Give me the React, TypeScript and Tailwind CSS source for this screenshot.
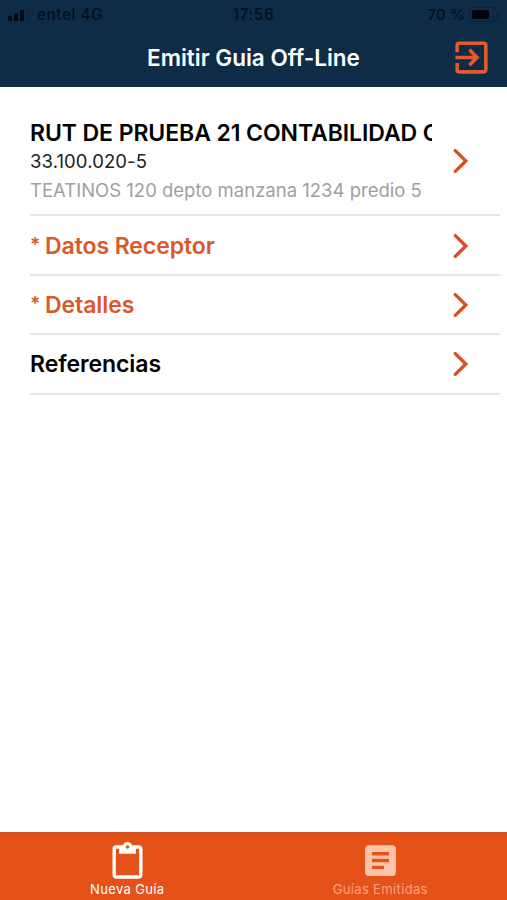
import type { ReactNode } from "react";
import { MdArticle, MdContentPaste, MdExitToApp } from "react-icons/md";

const sections = [
  { label: "Datos Receptor", required: true },
  { label: "Detalles", required: true },
  { label: "Referencias", required: false },
];

function Chevron() {
  return (
    <svg viewBox="0 0 16 26" className="h-[26px] w-4 shrink-0" fill="none">
      <path
        d="M2.3 2.6 12.8 13 2.3 23.4"
        stroke="#d6521f"
        strokeWidth="3.4"
        strokeLinecap="round"
      />
    </svg>
  );
}

function StatusBar() {
  return (
    <div className="grid h-7 grid-cols-3 items-center text-[15px] leading-none font-medium text-[#04101f]">
      <div className="flex items-center pl-2">
        <div className="flex h-3 w-[22px] translate-y-px items-end gap-[2px]">
          <span className="h-[5px] w-[4px] rounded-[1px] bg-[#020a15]" />
          <span className="h-[8px] w-[4px] rounded-[1px] bg-[#020a15]" />
          <span className="h-[11px] w-[4px] rounded-[1px] bg-[#020a15]" />
          <span className="h-3 w-[3px] rounded-[1px] bg-[#0b2640]" />
        </div>
        <span className="ml-[7px] pt-[2px] text-[15.5px] tracking-[0.45px] whitespace-nowrap">
          entel 4G
        </span>
      </div>
      <span className="pt-[2px] text-center text-[15.5px] tracking-[0.5px]">17:56</span>
      <div className="flex items-center justify-end pr-[7px]">
        <span className="tracking-[0.1px] whitespace-nowrap">70 %</span>
        <span className="ml-[4px] flex h-[15px] w-[28px] rounded-[4px] border border-[#0a2138] p-[2px]">
          <span className="w-[17px] rounded-[1px] bg-[#01060c]" />
        </span>
        <span className="ml-px h-[5px] w-[2px] rounded-r bg-[#0a2138]" />
      </div>
    </div>
  );
}

function Row({ children, className }: { children: ReactNode; className: string }) {
  return (
    <div className={`flex items-center border-b-2 border-[#e6e6e6] ${className}`}>
      <div className="w-[402px] shrink-0 overflow-hidden whitespace-nowrap">{children}</div>
      <div className="ml-[21px]">
        <Chevron />
      </div>
    </div>
  );
}

export default function App() {
  return (
    <div className="flex h-[900px] w-[507px] flex-col overflow-hidden bg-white font-['Inter','Liberation_Sans',sans-serif]">
      <header className="h-[87px] shrink-0 bg-[#0e2c47]">
        <StatusBar />
        <div className="grid h-[59px] grid-cols-[1fr_auto_1fr] items-center">
          <h1 className="col-start-2 text-[22.5px] font-semibold text-white">
            Emitir Guia Off-Line
          </h1>
          <MdExitToApp className="mr-[14px] size-[43px] justify-self-end text-[#e2592b]" />
        </div>
      </header>

      <main className="flex-1 pr-[7px] pl-[30px]">
        <Row className="h-[129.4px] pt-[20px]">
          <p className="pt-[2px] text-[23px] leading-[29px] font-semibold tracking-[-0.08px] text-black">
            RUT DE PRUEBA 21 CONTABILIDAD O
          </p>
          <p className="text-[18.5px] leading-[27px] tracking-[0.1px] text-[#222]">33.100.020-5</p>
          <p className="text-[18.5px] leading-[30px] text-[#a0a0a0]">
            TEATINOS 120 depto manzana 1234 predio 5
          </p>
        </Row>
        {sections.map((section) => (
          <Row key={section.label} className="h-[59.4px] pt-px">
            <p
              className={`flex text-[23px] leading-8 font-semibold tracking-[-0.08px] ${
                section.required ? "text-[#d9592a]" : "text-black"
              }`}
            >
              {section.required && <span className="w-[15px] text-[19px] leading-[29px]">*</span>}
              {section.label}
            </p>
          </Row>
        ))}
      </main>

      <nav className="grid h-[68px] shrink-0 grid-cols-2 border-t border-[#c9532a] bg-[#e55219] text-[13px] tracking-[0.35px]">
        <div className="flex flex-col items-center pt-[9px] text-white">
          <MdContentPaste className="ml-[2px] h-10 w-[41px]" />
          <span className="-mt-px ml-[1px] leading-4">Nueva Guía</span>
        </div>
        <div className="flex flex-col items-center pt-[7px] text-[#ffc4a8]">
          <MdArticle className="size-[41px]" />
          <span className="leading-4 text-[#f9a27c]">Guías Emitidas</span>
        </div>
      </nav>
    </div>
  );
}
